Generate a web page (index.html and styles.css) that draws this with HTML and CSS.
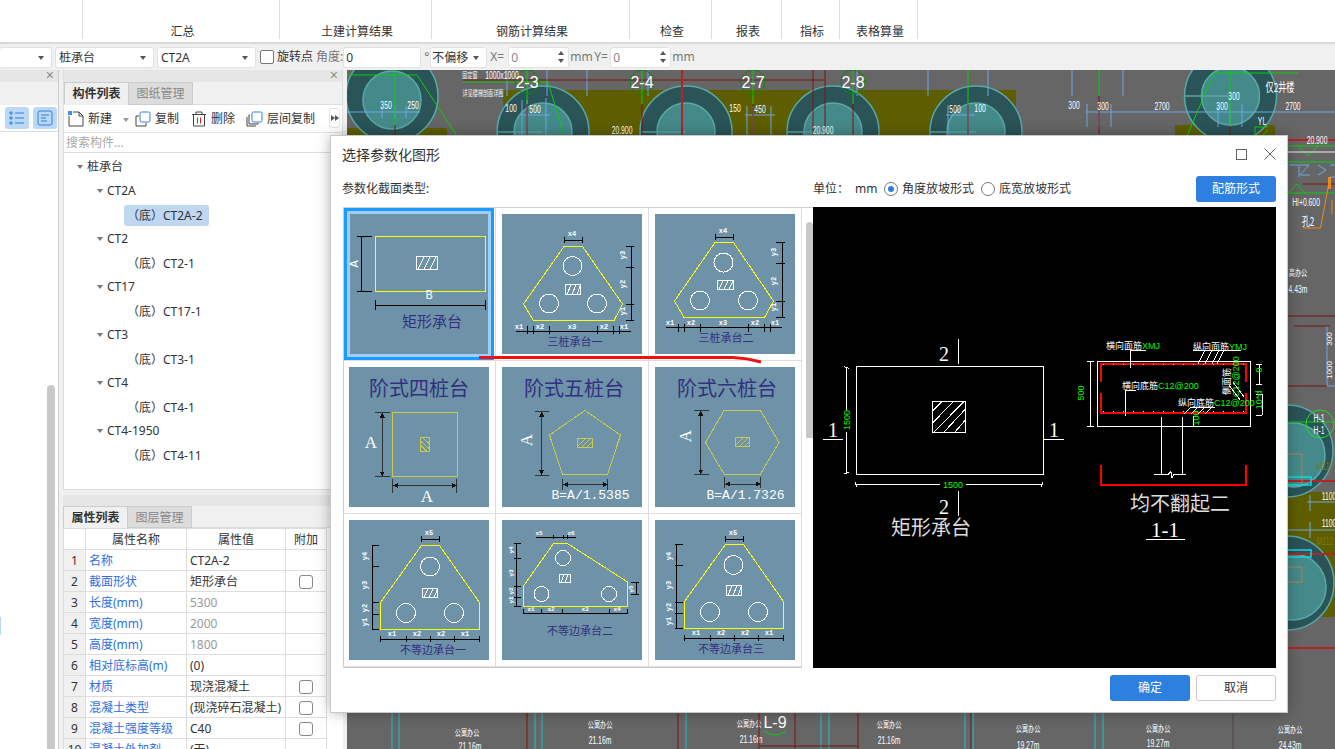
FILE: index.html
```html
<!DOCTYPE html>
<html lang="zh-CN">
<head>
<meta charset="utf-8">
<title>选择参数化图形</title>
<link rel="stylesheet" href="styles.css">
</head>
<body>
<div class="app">
  <header class="ribbon">
    <div class="rgroup g0"></div>
    <div class="rgroup g1">汇总</div>
    <div class="rgroup g2">土建计算结果</div>
    <div class="rgroup g3">钢筋计算结果</div>
    <div class="rgroup g4">检查</div>
    <div class="rgroup g5">报表</div>
    <div class="rgroup g6">指标</div>
    <div class="rgroup g7">表格算量</div>
  </header>

  <div class="optbar">
    <div class="sel s0"><i class="caret"></i></div>
    <div class="sel s1"><span>桩承台</span><i class="caret"></i></div>
    <div class="sel s1"><span>CT2A</span><i class="caret"></i></div>
    <label class="chk-label"><i class="box"></i>旋转点</label>
    <span class="muted ang">角度:</span>
    <div class="inp w-ang">0</div>
    <span class="muted deg">°</span>
    <div class="sel s2"><span>不偏移</span><i class="caret"></i></div>
    <span class="muted xeq">X=</span>
    <div class="inp w-sp gray">0<span class="spin"><i class="up"></i><i class="dn"></i></span></div>
    <span class="muted mm">mm</span>
    <span class="muted yeq">Y=</span>
    <div class="inp w-sp gray">0<span class="spin"><i class="up"></i><i class="dn"></i></span></div>
    <span class="muted mm">mm</span>
  </div>

  <main class="main">
    <aside class="pane-a">
      <div class="phead"><span class="px">×</span></div>
      <div class="pa-tabs"></div>
      <div class="pa-tools">
        <span class="tog"><svg viewBox="0 0 16 16" width="16" height="16"><path class="ic-b" d="M6 3h9M6 8h9M6 13h9"/><path class="ic-b" d="M1 2h2v2H1zM1 7h2v2H1zM1 12h2v2H1z"/></svg></span>
        <span class="tog"><svg viewBox="0 0 16 16" width="16" height="16"><rect class="ic-b" x="1" y="1" width="14" height="14" rx="2"/><path class="ic-b" d="M4 5h8M4 8h5M4 11h6"/></svg></span>
      </div>
      <div class="pa-body">
        <i class="pa-sliver"></i>
        <i class="pa-scroll"></i>
      </div>
    </aside>

    <div class="side">
      <section class="panel list-panel">
        <div class="phead"><span class="px">×</span></div>
        <div class="tabs tall"><span class="tab on">构件列表</span><span class="tab off">图纸管理</span></div>
        <div class="tools">
          <span class="tool t-new"><svg viewBox="0 0 16 16" width="16" height="16"><path class="ic-d" d="M1 5v10h14V5L11 1H5"/><path class="ic-d" d="M11 1v4h4"/><rect class="ic-fb" x="0" y="0" width="4" height="4"/></svg>新建<i class="caret c-new"></i></span>
          <span class="tool t-cp"><svg viewBox="0 0 16 16" width="16" height="16"><rect class="ic-b" x="5" y="1" width="10" height="10" rx="1.5"/><path class="ic-d" d="M4 5H1v10h10v-3"/></svg>复制</span>
          <span class="tool t-del"><svg viewBox="0 0 16 16" width="16" height="16"><path class="ic-d" d="M1 3.500h14M5 3V1h6v2M2.500 4v11h11V4"/><path class="ic-r" d="M6.500 6.500v6M9.500 6.500v6"/></svg>删除</span>
          <span class="tool t-lay"><svg viewBox="0 0 17 16" width="17" height="16"><rect class="ic-b" x="6" y="1" width="10" height="10" rx="1.500"/><path class="ic-d" d="M4 4H3v9h9v-1M1 6v9h9"/></svg>层间复制</span>
          <span class="more"><i></i><i></i></span>
        </div>
        <div class="search">搜索构件...</div>
        <div class="tree">
          <div class="node l0"><i class="arrow"></i>桩承台</div>
          <div class="node l1"><i class="arrow"></i>CT2A</div>
          <div class="node l2"><span class="leaf sel-leaf">（底）CT2A-2</span></div>
          <div class="node l1"><i class="arrow"></i>CT2</div>
          <div class="node l2"><span class="leaf">（底）CT2-1</span></div>
          <div class="node l1"><i class="arrow"></i>CT17</div>
          <div class="node l2"><span class="leaf">（底）CT17-1</span></div>
          <div class="node l1"><i class="arrow"></i>CT3</div>
          <div class="node l2"><span class="leaf">（底）CT3-1</span></div>
          <div class="node l1"><i class="arrow"></i>CT4</div>
          <div class="node l2"><span class="leaf">（底）CT4-1</span></div>
          <div class="node l1"><i class="arrow"></i>CT4-1950</div>
          <div class="node l2"><span class="leaf">（底）CT4-11</span></div>
        </div>
      </section>
      <section class="panel prop-panel">
        <div class="phead"></div>
        <div class="tabs"><span class="tab on">属性列表</span><span class="tab off">图层管理</span></div>
        <table class="props">
          <colgroup><col class="c1"><col class="c2"><col class="c3"><col class="c4"></colgroup>
          <thead><tr><th></th><th>属性名称</th><th>属性值</th><th>附加</th></tr></thead>
          <tbody>
            <tr><td class="idx">1</td><td class="nm">名称</td><td>CT2A-2</td><td></td></tr>
            <tr><td class="idx">2</td><td class="nm">截面形状</td><td>矩形承台</td><td class="ck"><i class="box"></i></td></tr>
            <tr><td class="idx">3</td><td class="nm">长度(mm)</td><td class="gr">5300</td><td></td></tr>
            <tr><td class="idx">4</td><td class="nm">宽度(mm)</td><td class="gr">2000</td><td></td></tr>
            <tr><td class="idx">5</td><td class="nm">高度(mm)</td><td class="gr">1800</td><td></td></tr>
            <tr><td class="idx">6</td><td class="nm">相对底标高(m)</td><td>(0)</td><td></td></tr>
            <tr><td class="idx">7</td><td class="nm">材质</td><td>现浇混凝土</td><td class="ck"><i class="box"></i></td></tr>
            <tr><td class="idx">8</td><td class="nm">混凝土类型</td><td>(现浇碎石混凝土)</td><td class="ck"><i class="box"></i></td></tr>
            <tr><td class="idx">9</td><td class="nm">混凝土强度等级</td><td>C40</td><td class="ck"><i class="box"></i></td></tr>
            <tr><td class="idx">10</td><td class="nm">混凝土外加剂</td><td>(无)</td><td></td></tr>
          </tbody>
        </table>
      </section>
    </div>

    <div class="canvas">
      <svg class="cad" viewBox="347 70 988 679" width="988" height="679">
        <g class="olive">
          <rect x="503" y="90" width="513" height="46"/>
          <rect x="347" y="128" width="100" height="8"/>
          <rect x="1175" y="125" width="100" height="11"/>
          <rect x="1287" y="492" width="48" height="125"/>
        </g>
        <g class="c-out">
          <circle cx="392" cy="96" r="46"/><circle cx="543" cy="132" r="46"/><circle cx="686" cy="132" r="46"/><circle cx="833" cy="132" r="46"/><circle cx="976" cy="132" r="46"/><circle cx="1230.500" cy="96" r="46"/>
          <circle cx="1287" cy="451" r="46"/><circle cx="1287" cy="583" r="47"/>
        </g>
        <g class="c-in">
          <circle cx="392" cy="100" r="29"/><circle cx="543" cy="132" r="29"/><circle cx="686" cy="132" r="29"/><circle cx="833" cy="132" r="29"/><circle cx="976" cy="132" r="29"/><circle cx="1230.500" cy="96" r="29"/>
          <circle cx="1293" cy="455" r="32"/><circle cx="1293" cy="587" r="33"/>
        </g>
        <path class="c-ln" d="M497 132h46M640 132h46M787 132h46M930 132h46M1185 96h45"/>
        <path class="c-blue" d="M507 70v26M547 70v26M587 70v26M648 70v26M857 70v26M928 70v26M988 70v26M1072 70v26M1123 70v26M522 100v36M527 100v36M546 98v38M747 106v30M753 106v30M771 106v30M948 105v31M968 105v31M1087 104v23M1099 104v23M1111 104v23M1218 104v23M1230 104v23M1242 104v23M382 106v12M395 106v12M406 106v12M521 115h29M745 115h30M946 115h29M1086 112h249M347 112h73M1307 502h28M1287 530h48M1310 495v16M1310 522v16M1327 326v60M1327 386h8"/>
        <path class="c-dred" d="M463 80h362M813 70v66M825 70v66M527 104v32M642 104v32M753 104v32M853 104v32M968 104v32M1099 96v38M1230 126v10M395 125v11M1303 184h32M1287 316h48M1294 326h36M1287 386h40"/>
        <path class="c-red" d="M682 70v66M1287 140h48M1287 481h48M1287 554h48M1287 648h48"/>
        <path class="c-green" d="M527 70v34M642 70v34M753 70v34M853 70v34M968 70v35M1099 70v26M1230 70v56M463 82h85L564 136M450 125l7 11M347 75h70L457 136M395 70v55M1214 73h84M1214 73l-27 63M1255 136v-9h13M1262 136l6-6M1287 146h48M1299 146l9 10 10-10M1287 162h48M1288 193h48M1288 193l9-9 8 9M1287 422h48"/>
        <circle class="c-gc" cx="527" cy="82" r="12"/><circle class="c-gc" cx="642" cy="82" r="12"/><circle class="c-gc" cx="753" cy="82" r="12"/><circle class="c-gc" cx="853" cy="82" r="12"/>
        <circle class="c-bgc" cx="1320" cy="424" r="14"/>
        <path class="c-gray" d="M1287 152h48"/>
        <path class="c-blue" d="M1289 165h10v12M1300 165h9l-9 10h10M1318 165l8 5-8 5M1330 165h5M1330 177h5"/>
        <path class="c-org" d="M1330 177l-9.500 51h-17.500M1332 200v14"/>
        <rect class="c-orgf" x="1328" y="177" width="3" height="12"/>
        <rect class="c-brn" x="1270" y="454" width="32" height="31"/><rect class="c-brn" x="1270" y="567" width="32" height="15"/>
        <rect class="c-cy" x="1270" y="477" width="41" height="8"/><rect class="c-cy" x="1270" y="550" width="41" height="7"/>
        <text class="t-2" x="527" y="88">2-3</text><text class="t-2" x="642" y="88">2-4</text><text class="t-2" x="753" y="88">2-7</text><text class="t-2" x="853" y="88">2-8</text>
        <g class="t-s">
          <text x="386" y="109">350</text><text x="413" y="109">250</text>
          <text x="511" y="112">100</text><text x="535" y="113">500</text><text x="622" y="134">20.900</text><text x="735" y="112">150</text><text x="760" y="113">450</text><text x="823" y="134">20.900</text>
          <text x="955" y="113">500</text><text x="980" y="112">100</text><text x="1074" y="109">300</text><text x="1103" y="110">300</text><text x="1162" y="110">2700</text><text x="1222" y="110">300</text><text x="1234" y="100">300</text><text x="1293" y="110">2700</text><text x="1262" y="125">YL</text>
          <text x="1317" y="144">20.900</text><text x="1306" y="206">HI+0.600</text>
          <text x="1329" y="342" transform="rotate(-90 1329 339)">300</text><text x="1329" y="373" transform="rotate(-90 1329 370)">1000</text>
          <text x="1329" y="500">1100</text><text x="1329" y="527">1100</text><text x="1319" y="422" class="t-b">H-1</text><text x="1319" y="434" class="t-b">H-1</text>
          <text x="502" y="79">1000x1000</text><text class="t-ol" x="1325" y="470">M112</text><text class="t-ol" x="1325" y="545">M112</text>
          <text x="470" y="78" class="zh tiny">固定窗</text><text x="483" y="96" class="zh tiny">详见楼梯剖面详图</text>
          <text x="1280" y="92" class="zh big">仅2井楼</text><text x="1308" y="226" class="zh big">孔2</text>
          <text x="1298" y="276" class="zh">高办公</text><text x="1298" y="293">4.43m</text>
          <text x="467" y="736" class="zh">公寓办公</text><text x="600" y="728" class="zh">公寓办公</text><text x="749" y="727" class="zh">公寓办公</text><text x="889" y="728" class="zh">公寓办公</text><text x="1028" y="732" class="zh">公寓办公</text><text x="1158" y="732" class="zh">公寓办公</text><text x="1290" y="733" class="zh">公寓办公</text>
          <text x="470" y="750">21.16m</text><text x="600" y="744">21.16m</text><text x="751" y="743">21.16m</text><text x="889" y="744">21.16m</text><text x="1028" y="749">19.27m</text><text x="1158" y="747">19.27m</text><text x="1290" y="749">24.43m</text>
        </g>
        <path class="c-cyan" d="M392 712v37M399 712v37M535 712v37M542 712v37M686 712v37M821 712v37M829 712v37M965 712v37M973 712v37M1095 712v37M1103 712v37M1233 712v37"/>
        <path class="c-dred" d="M527 712v37M678 712v37M759 712v37M795 712v37M858 712v37M759 746h99M971 712v37M1233 712v37"/>
        <path class="c-green" d="M764 731q11 8 22 0"/>
        <text class="t-2" x="775" y="728">L-9</text>
      </svg>
    </div>
  </main>

  <div class="dialog" role="dialog">
    <div class="dlg-title"><span>选择参数化图形</span>
      <span class="dlg-btns">
        <svg viewBox="0 0 11 11" width="11" height="11"><rect class="win" x=".5" y=".5" width="10" height="10"/></svg>
        <svg viewBox="0 0 12 12" width="12" height="12"><path class="win" d="M.5.500l11 11M11.500.500l-11 11"/></svg>
      </span>
    </div>
    <div class="dlg-sub">
      <span class="sub-l">参数化截面类型:</span>
      <span class="unit">单位：</span><span class="unit-mm">mm</span>
      <span class="radio on"></span><span class="rlabel">角度放坡形式</span>
      <span class="radio"></span><span class="rlabel">底宽放坡形式</span>
      <button class="btn primary cfg">配筋形式</button>
    </div>
    <div class="dlg-body">
      <div class="thumbs">
        <div class="grid">
          <div class="cell picked"><svg class="th" viewBox="0 0 140 140">
            <rect class="y" x="26.500" y="22.500" width="110" height="55"/>
            <rect class="w" x="67.500" y="42.500" width="21" height="13"/>
            <path class="w" d="M69 55l6-12M75 55l6-12M81 55l6-12"/>
            <path class="k" d="M12.500 22.500v55M8 22.500h15M8 77.500h15M26.500 91.500h110M26.500 86v10M136.500 86v10"/>
            <text class="dl big" x="9" y="50" transform="rotate(-90 9 50)">A</text><text class="dl big" x="80" y="85">B</text>
            <text class="cap m" x="83" y="113">矩形承台</text>
          </svg></div>
          <div class="cell"><svg class="th" viewBox="0 0 140 140">
            <polygon class="y" points="62,32.500 80.500,32.500 120.500,90 112,106.500 31.500,106.500 21.500,90"/>
            <circle class="w" cx="70.500" cy="52" r="9.500"/><circle class="w" cx="47" cy="89.500" r="9.500"/><circle class="w" cx="95" cy="89.500" r="9.500"/>
            <rect class="w" x="63.500" y="70.500" width="15" height="10"/><path class="w" d="M65 80.500l4-10M70 80.500l4-10M75 80.500l3-8"/>
            <path class="k" d="M62.500 26h18M62.500 23v6M80.500 23v6M129.500 32.500v74M124 32.500h8M124 53h8M124 90.500h8M124 106.500h8M13.500 117.500h115M25.500 112v8M31.500 112v8M47.500 112v8M95.500 112v8M111.500 112v8M117.500 112v8"/>
            <g class="dl"><text x="70" y="22">x4</text><text x="17" y="115">x1</text><text x="38" y="115">x2</text><text x="70" y="115">x3</text><text x="102" y="115">x2</text><text x="122" y="115">x1</text>
            <text x="125" y="43" transform="rotate(-90 123 43)">y3</text><text x="125" y="72" transform="rotate(-90 123 72)">y2</text><text x="125" y="99" transform="rotate(-90 123 99)">y1</text></g>
            <text class="cap s" x="73" y="132">三桩承台一</text>
          </svg></div>
          <div class="cell"><svg class="th" viewBox="0 0 140 140">
            <polygon class="y" points="60,28.500 78.500,28.500 118.500,87 109.500,103.500 29,103.500 19.500,87"/>
            <circle class="w" cx="68.500" cy="48.500" r="9.500"/><circle class="w" cx="45" cy="86.500" r="9.500"/><circle class="w" cx="93" cy="86.500" r="9.500"/>
            <rect class="w" x="62.500" y="66.500" width="16" height="9"/><path class="w" d="M64 75.500l4-9M69 75.500l4-9M74 75.500l4-9"/>
            <path class="k" d="M60.500 23h18M60.500 20v6M78.500 20v6M127.500 28.500v75M121 28.500h9M121 49.500h9M121 87h9M121 103.500h9M11 113.500h116M23.500 110v8M29.500 110v8M45.500 110v8M93.500 110v8M109.500 110v8M115.500 110v8"/>
            <g class="dl"><text x="68" y="19">x4</text><text x="15" y="111">x1</text><text x="36" y="111">x2</text><text x="68" y="111">x3</text><text x="100" y="111">x2</text><text x="120" y="111">x1</text>
            <text x="123" y="40" transform="rotate(-90 121 40)">y3</text><text x="123" y="69" transform="rotate(-90 121 69)">y2</text><text x="123" y="95" transform="rotate(-90 121 95)">y1</text></g>
            <text class="cap s" x="71" y="128">三桩承台二</text>
          </svg></div>

          <div class="cell"><svg class="th" viewBox="0 0 140 140">
            <text class="cap l" x="70" y="29">阶式四桩台</text>
            <rect class="o" x="43.500" y="45.500" width="65" height="64"/>
            <rect class="o" x="71.500" y="70.500" width="9" height="14"/><path class="o" d="M71.500 74l9 8M71.500 78l6 6M74 71l6.500 6"/>
            <path class="d" d="M33 47v61M26 45.500h15M26 109.500h15M45 118.500h61M43.500 112v14M107.500 112v14"/>
            <path class="af" d="M33 45.500l-2.500 5h5zM33 109.500l-2.500-5h5zM43.500 118.500l5-2.500v5zM107.500 118.500l-5-2.500v5z"/>
            <text class="af-w" x="22" y="81">A</text><text class="af-w" x="78" y="135">A</text>
          </svg></div>
          <div class="cell"><svg class="th" viewBox="0 0 140 140">
            <text class="cap l" x="72" y="29">阶式五桩台</text>
            <polygon class="o" points="83,43.500 118.500,68 105.500,107.500 60.500,107.500 47.500,68"/>
            <rect class="o" x="75.500" y="71.500" width="15" height="9"/><path class="o" d="M76 79l7-7M80 80l8-8M85 80l5-5"/>
            <path class="d" d="M39.500 46v60M33 44.500h14M33 108h14M62 117.500h43M60.500 112v11M105.500 112v11"/>
            <path class="af" d="M39.500 44.500l-2.500 5h5zM39.500 108l-2.500-5h5zM60.500 117.500l5-2.500v5zM105.500 117.500l-5-2.500v5z"/>
            <text class="af-w" x="30" y="73" transform="rotate(-90 30 73)">A</text>
            <text class="fm" x="88.500" y="132">B=A/1.5385</text>
          </svg></div>
          <div class="cell"><svg class="th" viewBox="0 0 140 140">
            <text class="cap l" x="72" y="29">阶式六桩台</text>
            <polygon class="o" points="69,43.500 105.500,43.500 124,75.500 105.500,107 69,107 50.500,75.500"/>
            <rect class="o" x="80.500" y="70.500" width="14" height="9"/><path class="o" d="M81 78l7-7M85 79l8-8M90 79l4-4"/>
            <path class="d" d="M45.500 45v61M39 43.500h15M39 107.500h15M70 117h35M69.500 110v11M105.500 110v11"/>
            <path class="af" d="M45.500 43.500l-2.500 5h5zM45.500 107.500l-2.500-5h5zM69.500 117l5-2.500v5zM105.500 117l-5-2.500v5z"/>
            <text class="af-w" x="36" y="69" transform="rotate(-90 36 69)">A</text>
            <text class="fm" x="90.500" y="132">B=A/1.7326</text>
          </svg></div>

          <div class="cell"><svg class="th" viewBox="0 0 140 140">
            <polygon class="y" points="72.500,25.500 90.500,25.500 130.500,82.500 130.500,109.500 31.500,109.500 31.500,82.500"/>
            <circle class="w" cx="81" cy="46.500" r="9.500"/><circle class="w" cx="57" cy="93" r="9.500"/><circle class="w" cx="105" cy="93" r="9.500"/>
            <rect class="w" x="73.500" y="68.500" width="15" height="9"/><path class="w" d="M75 77.500l4-9M80 77.500l4-9M85 77.500l3-7"/>
            <path class="k" d="M72.500 19.500h18M72.500 16v6M90.500 16v6M23.500 25.500v84M23 25.500h7M23 46.500h7M23 82.500h7M23 94h7M23 109.500h7M31.500 119.500h99M31.500 116v6M57.500 116v6M81.500 116v6M105.500 116v6M130.500 116v6"/>
            <g class="dl"><text x="80" y="15">x5</text><text x="43" y="116">x1</text><text x="68" y="116">x2</text><text x="92" y="116">x2</text><text x="116" y="116">x1</text>
            <text x="19" y="37" transform="rotate(-90 18 37)">y4</text><text x="19" y="66" transform="rotate(-90 18 66)">y3</text><text x="19" y="89" transform="rotate(-90 18 89)">y2</text><text x="19" y="103" transform="rotate(-90 18 103)">y1</text></g>
            <text class="cap s" x="84" y="134">不等边承台一</text>
          </svg></div>
          <div class="cell"><svg class="th" viewBox="0 0 140 140">
            <polygon class="y" points="51.500,23.500 65.500,23.500 125.500,62 125.500,86.500 21.500,86.500 21.500,66"/>
            <circle class="w" cx="61" cy="38" r="7.500"/><circle class="w" cx="39.500" cy="74" r="7.500"/><circle class="w" cx="107" cy="74" r="7.500"/>
            <rect class="w" x="57.500" y="54.500" width="11" height="8"/><path class="w" d="M59 62.500l3-8M63 62.500l3-8"/>
            <path class="k" d="M34 17.500h40M51.500 15v4M61.500 15v4M65.500 15v4M14.500 23.500v63M12 23.500h7M12 38.500h7M12 66h7M12 77.500h7M12 86.500h7M134.500 62.500v12M129 62.500h8M129 74.500h8M21.500 93.500h104M21.500 89v5M39.500 89v5M60.500 89v5M107.500 89v5M125.500 89v5"/>
            <g class="dl xs"><text x="37" y="15">x5</text><text x="69" y="15">x6</text><text x="29" y="91">x1</text><text x="49" y="91">x2</text><text x="83" y="91">x3</text><text x="115" y="91">x4</text>
            <text x="12" y="31" transform="rotate(-90 11 31)">y4</text><text x="12" y="54" transform="rotate(-90 11 54)">y3</text><text x="12" y="72" transform="rotate(-90 11 72)">y2</text><text x="12" y="81" transform="rotate(-90 11 81)">y1</text><text x="132" y="70" transform="rotate(-90 131 70)">y5</text></g>
            <text class="cap s" x="78" y="115">不等边承台二</text>
          </svg></div>
          <div class="cell"><svg class="th" viewBox="0 0 140 140">
            <polygon class="y" points="70.500,24.500 88.500,24.500 128.500,81.500 128.500,108.500 29.500,108.500 29.500,81.500"/>
            <circle class="w" cx="78.500" cy="45" r="9.500"/><circle class="w" cx="55" cy="92" r="9.500"/><circle class="w" cx="103" cy="92" r="9.500"/>
            <rect class="w" x="71.500" y="65.500" width="15" height="10"/><path class="w" d="M73 75.500l4-10M78 75.500l4-10M83 75.500l3-8"/>
            <path class="k" d="M70.500 19h18M70.500 16v6M88.500 16v6M21.500 24.500v84M20 24.500h8M20 45.500h8M20 82.500h8M20 93h8M20 108.500h8M29.500 118.500h99M29.500 115v6M55.500 115v6M79.500 115v6M103.500 115v6M128.500 115v6"/>
            <g class="dl"><text x="78" y="15">x5</text><text x="41" y="115">x1</text><text x="66" y="115">x2</text><text x="90" y="115">x2</text><text x="114" y="115">x1</text>
            <text x="17" y="37" transform="rotate(-90 16 37)">y4</text><text x="17" y="66" transform="rotate(-90 16 66)">y3</text><text x="17" y="88" transform="rotate(-90 16 88)">y2</text><text x="17" y="102" transform="rotate(-90 16 102)">y1</text></g>
            <text class="cap s" x="76" y="133">不等边承台三</text>
          </svg></div>
        </div>
        <i class="th-scroll"></i>
      </div>
      <svg class="preview" viewBox="0 0 463 461" width="463" height="461">
        <rect class="pw" x="43.500" y="159.500" width="187" height="108"/>
        <rect class="pw" x="119.500" y="194.500" width="33" height="31"/>
        <path class="pw" d="M119.500 204l9.500-9.500M119.500 216l21-21.500M121 225l30-30.500M131 225l21.500-23M142 225l10.500-12M145.500 131.500v25M145.500 284v25M10 232h20M230.500 232h20M33.500 160v107M31 159.500l5 2M31 267l5-2M42 277.500h188M42 275l2 5M230 275l-2 5"/>
        <text class="pt" x="131" y="154">2</text><text class="pt" x="131" y="307">2</text><text class="pt" x="20" y="230">1</text><text class="pt" x="241" y="230">1</text>
        <rect class="bk" x="28" y="203" width="10" height="22"/>
        <text class="pg" x="37" y="213" transform="rotate(-90 37 213)">1500</text>
        <rect class="bk" x="127" y="272" width="26" height="11"/>
        <text class="pg" x="140" y="281">1500</text>
        <text class="pcn" x="118" y="328">矩形承台</text>

        <rect class="pw" x="284.500" y="154.500" width="153" height="65"/>
        <path class="pr" d="M288 175V157H433V175M288 186V205.500H433V186M288 258V278H433V258"/>
        <path class="py" d="M290 157H432M290 204H432"/>
        <path class="pw" d="M277.500 155v64M274 154.500h7M274 219.500h7M348.500 209.500v57.500M369.500 209.500v57.500M341 267.500h14l3-3 1 6 2-3h12M333 143.500h-15.500v17M333 332.500h39M380 143.500h48M385 157l7-14M392 157l7-14M399 157l7-14M404 157l7-14M323 183.500h-10.500v25M402 200h-24M371 207l7-7M378 207l7-7M385 207l7-7M392 207l7-7M380 209v11M416 178l11 15M420 175l11 15M443 157.500h6M443 177.500h6M446 157.500v20M443 187h6M443 208h6M449 187v21"/>
        <g class="pzh"><text x="293" y="142">横向面筋<tspan class="gg">XMJ</tspan></text><text x="380" y="143">纵向面筋<tspan class="gg">YMJ</tspan></text><text x="309" y="182">横向底筋<tspan class="gg">C12@200</tspan></text><text x="365" y="199">纵向底筋<tspan class="gg">C12@200</tspan></text>
        <text x="417" y="188" transform="rotate(-90 417 188)">侧面筋</text><text class="gg" x="426" y="190" transform="rotate(-90 426 190)">C12@200</text></g>
        <g class="pg sm"><text x="271" y="186" transform="rotate(-90 271 186)">500</text><text x="389" y="214" transform="rotate(-90 386 214)">100</text><text x="452" y="166" transform="rotate(-90 449 166)">0</text><text x="452" y="196" transform="rotate(-90 449 196)">10*d</text></g>
        <text class="pcn" x="367" y="304">均不翻起二</text>
        <text class="pt oo" x="352" y="330">1-1</text>
      </svg>
    </div>
    <div class="dlg-foot">
      <button class="btn primary">确定</button>
      <button class="btn ghost">取消</button>
      <i class="grip"></i>
    </div>
  </div>

  <svg class="mark" viewBox="0 0 300 10" width="300" height="10"><path d="M2 2.500H256Q270 3 284 7"/></svg>
</div>
</body>
</html>
```

FILE: styles.css
```css
*{box-sizing:border-box}
html,body{margin:0;padding:0;height:100%;overflow:hidden;background:#fff}
body{font:12px/16px "Noto Sans","Noto Sans CJK SC",sans-serif;color:#333}
i{font-style:normal}
.app{position:relative;width:1335px;height:749px;overflow:hidden;background:#f0f0f0}

/* ribbon */
.ribbon{display:flex;height:44px;background:#fff;border-bottom:2px solid #d9d9d9;align-items:flex-start}
.rgroup{height:39px;padding:22px 0 0 3px;text-align:center;line-height:20px;border-right:1px solid #ddd;white-space:nowrap}
.g0{width:83px}.g1{width:197px}.g2{width:152px}.g3{width:198px}.g4{width:82px}.g5{width:70px}.g6{width:58px}.g7{width:78px}

/* option bar */
.optbar{display:flex;align-items:center;height:26px;background:#f0f0f0;gap:3px}
.sel,.inp{position:relative;height:21px;background:#fff;border:1px solid #e2e2e2;border-radius:3px;line-height:19px;padding-left:3px;white-space:nowrap}
.inp{padding-left:2px}
.sel.s0{width:52px;border-left:0}
.sel.s1{width:99px}
.sel.s2{width:57px;margin-left:-1px;padding-left:1px}
.caret{position:absolute;right:7px;top:8px;width:0;height:0;border:3.500px solid transparent;border-top:4px solid #555;border-bottom:0}
.chk-label{display:flex;align-items:center;gap:3px;margin-left:1px}
.box{display:inline-block;width:14px;height:14px;border:1px solid #777;border-radius:2px;background:#fff}
.muted{color:#777}
.ang{margin-right:-3px}
.w-ang{width:78px}
.deg{width:4px}
.xeq{width:17px}
.yeq{width:15px}
.w-sp{width:61px;margin-left:-2px}
.gray{color:#888}
.mm{margin-left:-2px;width:21px}
.spin{position:absolute;right:4px;top:3px;display:flex;flex-direction:column;gap:4px}
.spin i{width:0;height:0;border:3px solid transparent}
.spin .up{border-bottom:4px solid #555;border-top:0}
.spin .dn{border-top:4px solid #555;border-bottom:0}

/* main row */
.main{display:flex;height:679px}
.pane-a{width:59px;display:flex;flex-direction:column;background:#fff;border-right:1px solid #ccc}
.phead{height:12px;background:#e6e6e6;position:relative;flex:none}
.px{position:absolute;right:4px;top:-2px;font:14px/14px "Liberation Sans",sans-serif;color:#888}
.pa-tabs{height:23px;background:#f0f0f0;flex:none}
.pa-tools{display:flex;gap:4px;height:27px;padding:2px 0 0 5px;border-bottom:1px solid #ddd;flex:none}
.tog{width:24px;height:22px;background:#bcd8f4;border-radius:3px;display:flex;align-items:center;justify-content:center}
.pa-body{flex:1;position:relative}
.pa-scroll{position:absolute;left:47px;top:253px;bottom:0;width:8px;background:#c8c8c8;border-radius:4px 4px 0 0}
.pa-sliver{position:absolute;left:0;top:485px;width:1px;height:18px;background:#bcd8f4}
.ic-b{fill:none;stroke:#2d7fe0;stroke-width:1}
.ic-d{fill:none;stroke:#444;stroke-width:1}
.ic-r{fill:none;stroke:#d22;stroke-width:1}
.ic-fb{fill:#3d8fe8}

.side{width:280px;margin-left:4px;display:flex;flex-direction:column;gap:5px}
.panel{background:#fff;display:flex;flex-direction:column}
.list-panel{height:420px;border:1px solid #ddd;border-top:0}
.tabs{display:flex;height:22px;background:#f0f0f0;flex:none;border-bottom:1px solid #ddd}
.tabs.tall{height:23px}
.tab{width:65px;height:22px;line-height:21px;text-align:center;border:1px solid #ccc}
.tabs.tall .tab{height:23px}
.tab.on{background:#f0f0f0;font-weight:700;border-bottom-color:#f0f0f0}
.tab.off{width:65px;background:#dcdcdc;color:#888;margin-left:-1px}
.tools{display:flex;align-items:center;height:28px;position:relative;border-bottom:1px solid #e4e4e4;flex:none}
.tool{display:flex;align-items:center;gap:4px;position:relative}
.t-new{margin-left:4px;width:61px}
.c-new{right:0;top:7px;border-top-color:#999}
.t-cp{margin-left:6px;width:56px}
.t-del{width:55px}
.more{position:absolute;right:2px;top:3px;width:11px;height:20px;background:#fff;border:1px solid #e4e4e4;border-radius:3px;display:flex;align-items:center;justify-content:center}
.more i{width:0;height:0;border:3px solid transparent;border-left:4px solid #555;border-right:0}
.search{height:20px;line-height:19px;color:#aaa;padding-left:2px;border-bottom:1px solid #ddd;flex:none}
.tree{padding-top:2px;flex:1}
.node{height:24px;line-height:24px;display:flex;align-items:center;white-space:nowrap;position:relative}
.l0{padding-left:13px}
.l1{padding-left:33px}
.l2{padding-left:60px}
.arrow{width:0;height:0;border:3px solid transparent;border-top:4px solid #777;border-bottom:0;margin-right:4px}
.leaf{display:inline-block;padding:0 3px;height:21px;line-height:21px;border-radius:3px}
.sel-leaf{background:#bfd7f0;width:85px}

.prop-panel{flex:1;overflow:hidden}
.prop-panel .phead{height:11px}
.props{border-collapse:collapse;table-layout:fixed;width:263px;background:#fff}
.c1{width:22px}.c2{width:101px}.c3{width:99px}.c4{width:41px}
.props th,.props td{height:21px;border:1px solid #ddd;padding:0 0 0 3px;font-weight:400;line-height:19px;white-space:nowrap;overflow:hidden}
.props th{text-align:center;padding:0}
.props td.idx{background:#f0f0f0;text-align:center;padding:0}
.props td.nm{color:#2f6fe0}
.props td.gr{color:#999}
.props td.ck{text-align:center;padding:0}
.ck .box{vertical-align:middle;border-color:#888;border-radius:3px}

.canvas{width:988px;margin-left:4px;background:#666;overflow:hidden}
.cad{display:block}
.olive rect{fill:#5e5e00}
.c-out circle{fill:#2a5457;stroke:#5aa9a9;stroke-width:1.500}
.c-in circle{fill:#458a8a;stroke:#5aa9a9;stroke-width:1.500}
.c-ln{stroke:#5ea5a5;stroke-width:1.500;fill:none}
.c-blue{stroke:#6fa6e2;stroke-width:1;fill:none}
.c-dred{stroke:#7a1414;stroke-width:1;fill:none}
.c-red{stroke:#b32424;stroke-width:2;fill:none}
.c-green{stroke:#0dcc0d;stroke-width:1;fill:none}
.c-gc{stroke:#0a8a0a;stroke-width:1;fill:none}
.c-bgc{stroke:#22dd22;stroke-width:1;fill:none}
.c-gray{stroke:#aaa;stroke-width:2}
.c-org{stroke:#ee8a18;stroke-width:1;fill:none}
.c-orgf{fill:#ee8a18}
.c-brn{stroke:#b0845a;fill:none}
.c-cy{stroke:#15d8e0;fill:none;stroke-width:1.500}
.c-cyan{stroke:#1fc0c8;stroke-width:1;fill:none}
.t-2{fill:#fff;font:16px "Liberation Sans",sans-serif;text-anchor:middle}
.t-s text{fill:#fff;font:10px "Liberation Sans",sans-serif;text-anchor:middle}
.t-s text:not([transform]){transform-box:fill-box;transform-origin:center;transform:scaleX(.68)}
.t-s text[transform]{font-size:8px}
.t-s .zh{font:9px "Noto Sans CJK SC",sans-serif}
.t-s .zh.tiny{font-size:7.500px}
.t-s .zh.big{font-size:12px}
.t-s .t-ol{fill:#7b7b10}

/* dialog */
.dialog{position:absolute;left:331px;top:136px;width:956px;height:576px;background:#fff;box-shadow:0 0 0 1px #c8c8c8,0 0 14px rgba(0,0,0,.35);display:flex;flex-direction:column}
.dlg-title{height:38px;display:flex;align-items:center;justify-content:space-between;padding:0 11px;font-size:14px;flex:none}
.dlg-btns{display:flex;gap:17px;align-items:center;margin-top:-2px}
.win{fill:none;stroke:#666;stroke-width:1}
.dlg-sub{height:33px;display:flex;align-items:center;padding:0 11px 4px;flex:none}
.sub-l{margin-right:auto}
.unit{width:42px}
.unit-mm{width:29px}
.radio{width:14px;height:14px;border:1px solid #777;border-radius:50%;background:#fff;margin-right:4px;position:relative;flex:none}
.radio.on::after{content:"";position:absolute;left:3px;top:3px;width:6px;height:6px;border-radius:50%;background:#2d7fe0}
.rlabel{width:79px}
.cfg{margin-left:118px}
.btn{width:80px;height:26px;border-radius:3px;font:12px/24px "Noto Sans","Noto Sans CJK SC",sans-serif;padding:0;border:1px solid transparent}
.primary{background:#2d7fe0;color:#fff}
.ghost{background:#fff;color:#333;border-color:#ccc}
.dlg-body{display:flex;height:461px;padding-left:12px;flex:none}
.thumbs{position:relative;width:470px;height:461px;overflow:hidden;border-top:1px solid #d0d0d0;background:#fff}
.grid{display:grid;grid-template-columns:repeat(3,153px);grid-auto-rows:153px;width:459px;height:460px;box-shadow:inset 1px 0 0 #ccc,inset 0 -1px 0 #ccc}
.cell{position:relative;padding:6px 0 0 6px;border-right:1px solid #ddd;border-bottom:1px solid #ddd;overflow:hidden}
.picked::after{content:"";position:absolute;left:1px;top:0;right:1px;bottom:0;border:3px solid #1a9cff;box-shadow:inset 0 0 0 3px #a0cdf5}
.th{display:block;width:140px;height:140px;background:#6e93a8;shape-rendering:crispEdges}
.th-scroll{position:absolute;left:463px;top:14px;width:7px;height:216px;background:#c8c8c8;border-radius:4px 4px 0 0}
.y{fill:none;stroke:#ff0;stroke-width:1}
.w{fill:none;stroke:#fff;stroke-width:1}
.k{fill:none;stroke:#000;stroke-width:1}
.o{fill:none;stroke:#c9c94a;stroke-width:1}
.d{fill:none;stroke:#333;stroke-width:1}
.af{fill:#111}
.af-w{fill:#fff;font:17px "Liberation Serif",serif;text-anchor:middle}
.dl text,text.dl{fill:#fff;font:bold 7px "Liberation Mono",monospace;text-anchor:middle}
.dl.xs text{font-size:6px}
text.dl.big{font:12px "Liberation Mono",monospace}
.cap{fill:#33307f;font-family:"Noto Sans CJK SC",sans-serif;text-anchor:middle}
.cap.m{font-size:15px}
.cap.s{font-size:11px}
.cap.l{font-size:20px}
.fm{fill:#fff;font:13px "Liberation Mono",monospace;text-anchor:middle}
.preview{display:block;background:#000;shape-rendering:crispEdges}
.pw{fill:none;stroke:#fff;stroke-width:1}
.pr{fill:none;stroke:#f00;stroke-width:2}
.py{fill:none;stroke:#ff0;stroke-width:1;stroke-dasharray:1 9}
.bk{fill:#000}
.pt{fill:#fff;font:20px "Liberation Serif",serif;text-anchor:middle}
.pt.oo{font-size:21px}
.pg,.pg text{fill:#0f0;font:9px "Liberation Sans",sans-serif;text-anchor:middle}
.pcn{fill:#dcdcdc;font:20px "Noto Sans CJK SC",sans-serif;text-anchor:middle}
.pzh text{fill:#fff;font:9px "Noto Sans CJK SC",sans-serif}
.pzh .gg{fill:#0f0;font-family:"Liberation Sans",sans-serif}
.dlg-foot{position:relative;flex:1;display:flex;justify-content:flex-end;gap:6px;padding:7px 11px 0 0}
.grip{position:absolute;right:3px;bottom:3px;width:6px;height:6px;background:radial-gradient(circle,#777 40%,transparent 45%) 0 0/2px 2px}
.mark{position:absolute;left:477px;top:354.500px;pointer-events:none}
.mark path{fill:none;stroke:#f01010;stroke-width:3}
```
